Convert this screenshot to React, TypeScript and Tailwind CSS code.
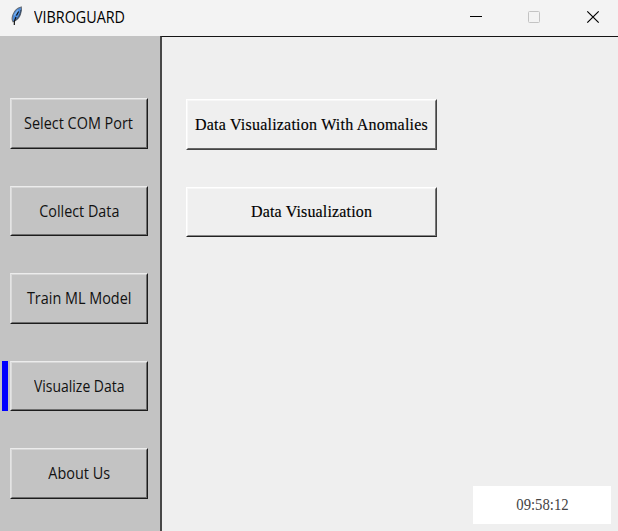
import React from "react";

type Item = { label: string; box: string; text: string; active?: boolean };

const NAV: Item[] = [
  { label: "Select COM Port", box: "mt-[61px] h-[51px]", text: "pb-px scale-x-[0.93]" },
  { label: "Collect Data", box: "mt-[37px] h-[50px]", text: "scale-x-[0.925]" },
  { label: "Train ML Model", box: "mt-[37px] h-[51px]", text: "pb-px scale-x-[0.93]" },
  { label: "Visualize Data", box: "mt-[37px] h-[50px]", text: "scale-x-[0.9]", active: true },
  { label: "About Us", box: "mt-[37px] h-[51px]", text: "pb-px scale-x-[0.93]" },
];

function Feather() {
  return (
    <svg width="13" height="20" viewBox="0 0 13 20" className="block">
      <path d="M11.3 1C7.6 1.8 4.4 4.8 3 8.6C1.9 11.5 1.9 14 3 15.8C6.4 14.6 9.2 12 10.4 8.6C11.3 6 11.9 3 11.3 1Z" fill="#4a8bdc" stroke="#666c74" strokeWidth="1.1" />
      <path d="M10.8 4C10.5 8.5 8 12.8 3.8 15.5" fill="none" stroke="#34465f" strokeWidth="1" />
      <path d="M8.6 5.5L6.4 9.5M6 11L4.4 15L4.3 19" fill="none" stroke="#151515" strokeWidth="1.2" />
      <path d="M8 3.8L4.2 9.4" stroke="#78b2f2" strokeWidth="1.3" />
    </svg>
  );
}

export default function App() {
  return (
    <div className="flex h-[531px] w-[618px] flex-col overflow-hidden bg-[#efefef] text-black">
      <header className="flex h-9 shrink-0 items-center bg-[#f3f3f3] font-['Open_Sans','Noto_Sans',sans-serif]">
        <div className="mb-[5px] ml-[10px]"><Feather /></div>
        <h1 className="mb-[3px] ml-[11px] origin-left scale-x-[0.925] whitespace-nowrap text-[15.5px] leading-5">VIBROGUARD</h1>
        <svg className="mb-[2px] ml-auto block" width="148" height="34" viewBox="0 0 148 34" fill="none">
          <path d="M0 16.5H12" stroke="#000" />
          <rect x="58.5" y="11.5" width="11" height="11" rx="1" stroke="#c3c3c3" />
          <path d="M117.3 11.3L128.7 22.7M128.7 11.3L117.3 22.7" stroke="#000" strokeWidth="1.2" />
        </svg>
      </header>
      <div className="flex min-h-0 flex-1">
        <nav className="flex w-[160px] shrink-0 flex-col bg-[#c3c3c3] pt-px">
          {NAV.map((item) => (
            <div key={item.label} className={`flex shrink-0 ${item.box}`}>
              <div className={`mr-[2px] ml-[2px] w-[6px] shrink-0 ${item.active ? "bg-[#0000ff]" : ""}`} />
              <button className="flex w-[138px] border border-t-[#ececec] border-r-[#1c1c1c] border-b-[#1c1c1c] border-l-[#e4e4e4]">
                <span className="flex h-full w-full items-center justify-center border border-t-[#d6d6d6] border-r-[#6e6e6e] border-b-[#6e6e6e] border-l-[#dadada] font-['Open_Sans','Noto_Sans',sans-serif] text-[15.5px] leading-5 text-[#111]">
                  <span className={`block whitespace-nowrap ${item.text}`}>{item.label}</span>
                </span>
              </button>
            </div>
          ))}
        </nav>
        <main className="flex flex-1 flex-col border-t border-l-2 border-t-[#151515] border-l-[#484848] font-['Liberation_Serif',serif]">
          <button className="mt-[62px] ml-[24px] flex h-[51px] w-[251px] shrink-0 border border-t-white border-r-[#444] border-b-[#444] border-l-white">
            <span className="flex h-full w-full items-center justify-center border border-t-[#f7f7f7] border-r-[#777] border-b-[#666] border-l-[#f7f7f7] pt-px text-[16px]">
              <span className="whitespace-nowrap tracking-[0.22px] [-webkit-text-stroke:0.15px_#000]">Data Visualization With Anomalies</span>
            </span>
          </button>
          <button className="mt-[37px] ml-[24px] flex h-[50px] w-[251px] shrink-0 border border-t-white border-r-[#444] border-b-[#222] border-l-white">
            <span className="flex h-full w-full items-center justify-center border border-t-[#f7f7f7] border-r-[#777] border-b-[#888] border-l-[#f7f7f7] text-[16px]">
              <span className="whitespace-nowrap tracking-[0.16px] [-webkit-text-stroke:0.15px_#000]">Data Visualization</span>
            </span>
          </button>
          <div className="mt-auto mr-[7px] mb-[7px] flex h-[38px] w-[138px] items-center justify-center self-end bg-white text-[16px] text-[#444]">
            <time className="block scale-x-[0.92]">09:58:12</time>
          </div>
        </main>
      </div>
    </div>
  );
}
